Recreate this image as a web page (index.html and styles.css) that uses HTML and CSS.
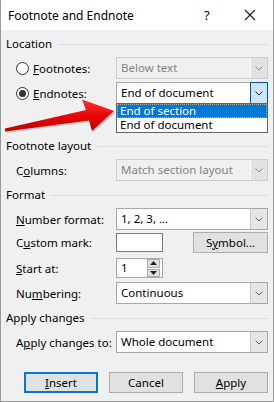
FILE: index.html
```html
<!DOCTYPE html>
<html lang="en">
<head>
    <meta charset="UTF-8">
    <meta name="viewport" content="width=device-width, initial-scale=1.0">
    <title>Footnote and Endnote</title>
    <link rel="stylesheet" href="styles.css">
</head>
<body>

    <div class="dialog">
        <div class="titlebar">
            <span class="title">Footnote and Endnote</span>
            <span class="help">?</span>
            <span class="close">
                <svg width="12" height="12" viewBox="0 0 12 12"><path d="M1 1L11 11M11 1L1 11" stroke="#1a1a1a" stroke-width="1.1" fill="none"/></svg>
            </span>
        </div>

        <div class="body">
            <div class="group-title">Location</div>
            <div class="row first">
                <span class="label radio-label"><span class="radio"></span><u>F</u>ootnotes:</span>
                <div class="combo disabled">
                    <span class="combo-text">Below text</span>
                    <span class="combo-btn"><svg width="8" height="5" viewBox="0 0 8 5"><path d="M0.5 0.5L4 4L7.5 0.5" stroke="#8a8a8a" fill="none"/></svg></span>
                </div>
            </div>
            <div class="row endnotes">
                <span class="label radio-label"><span class="radio checked"></span><u>E</u>ndnotes:</span>
                <div class="combo open">
                    <span class="combo-text">End of document</span>
                    <span class="combo-btn"><svg width="8" height="5" viewBox="0 0 8 5"><path d="M0.5 0.5L4 4L7.5 0.5" stroke="#333" fill="none"/></svg></span>
                    <ul class="combo-list">
                        <li class="selected">End of section</li>
                        <li>End of document</li>
                    </ul>
                </div>
            </div>

            <div class="group-title layout-title">Footnote layout</div>
            <div class="row first">
                <span class="label">C<u>o</u>lumns:</span>
                <div class="combo disabled">
                    <span class="combo-text">Match section layout</span>
                    <span class="combo-btn"><svg width="8" height="5" viewBox="0 0 8 5"><path d="M0.5 0.5L4 4L7.5 0.5" stroke="#8a8a8a" fill="none"/></svg></span>
                </div>
            </div>

            <div class="group-title">Format</div>
            <div class="row first">
                <span class="label"><u>N</u>umber format:</span>
                <div class="combo">
                    <span class="combo-text">1, 2, 3, ...</span>
                    <span class="combo-btn"><svg width="8" height="5" viewBox="0 0 8 5"><path d="M0.5 0.5L4 4L7.5 0.5" stroke="#606060" fill="none"/></svg></span>
                </div>
            </div>
            <div class="row mark-row">
                <span class="label">C<u>u</u>stom mark:</span>
                <div class="textbox mark-box"></div>
                <button class="btn symbol-btn">S<u>y</u>mbol...</button>
            </div>
            <div class="row start-row">
                <span class="label"><u>S</u>tart at:</span>
                <div class="textbox spin-box">
                    <span class="spin-text">1</span>
                    <span class="spin">
                        <span class="spin-up"><svg width="7" height="4" viewBox="0 0 7 4"><path d="M0 4L3.5 0L7 4Z" fill="#222"/></svg></span>
                        <span class="spin-down"><svg width="7" height="4" viewBox="0 0 7 4"><path d="M0 0L3.5 4L7 0Z" fill="#222"/></svg></span>
                    </span>
                </div>
            </div>
            <div class="row numbering-row">
                <span class="label">Nu<u>m</u>bering:</span>
                <div class="combo">
                    <span class="combo-text">Continuous</span>
                    <span class="combo-btn"><svg width="8" height="5" viewBox="0 0 8 5"><path d="M0.5 0.5L4 4L7.5 0.5" stroke="#606060" fill="none"/></svg></span>
                </div>
            </div>

            <div class="group-title apply-title">Apply changes</div>
            <div class="row first">
                <span class="label">A<u>p</u>ply changes to:</span>
                <div class="combo">
                    <span class="combo-text">Whole document</span>
                    <span class="combo-btn"><svg width="8" height="5" viewBox="0 0 8 5"><path d="M0.5 0.5L4 4L7.5 0.5" stroke="#606060" fill="none"/></svg></span>
                </div>
            </div>

            <div class="button-row">
                <button class="btn default-btn"><u>I</u>nsert</button>
                <button class="btn">Cancel</button>
                <button class="btn"><u>A</u>pply</button>
            </div>
        </div>

        <svg class="red-arrow" width="120" height="42" viewBox="0 94 120 42">
            <defs>
                <linearGradient id="arrowFill" x1="0" y1="0" x2="0" y2="1">
                    <stop offset="0" stop-color="#ff3030"/>
                    <stop offset="0.5" stop-color="#e80808"/>
                    <stop offset="1" stop-color="#b80000"/>
                </linearGradient>
            </defs>
            <path d="M4 128.5L85 110L81 99.5L113 111L91 131L88 120.5L4 131.5Z" fill="#000" opacity="0.18" transform="translate(1.2,1.6)"/>
            <path d="M4 128.5L85 110L81 99.5L113 111L91 131L88 120.5L4 131.5Z" fill="url(#arrowFill)"/>
        </svg>
    </div>

</body>
</html>
```

FILE: styles.css
```css
body {
    margin: 0;
    font-family: "Noto Sans", "Open Sans", sans-serif;
    font-size: 11.5px;
    color: #000;
}
.dialog {
    position: relative;
    width: 274px;
    height: 402px;
    box-sizing: border-box;
    background-color: #f0f0f0;
    border: 1px solid #9a9a9a;
    border-top: none;
    overflow: hidden;
}
.titlebar {
    display: flex;
    align-items: center;
    height: 30px;
    background-color: #fff;
    padding-left: 7px;
}
.title {
    font-size: 12px;
    flex: 1;
}
.help {
    font-size: 13px;
    width: 40px;
}
.close {
    display: flex;
    width: 29px;
}
.body {
    padding: 6px 5px 0 5px;
}
.group-title {
    display: flex;
    align-items: center;
    height: 16px;
    line-height: 16px;
}
.group-title::after {
    content: "";
    flex: 1;
    height: 1px;
    margin-left: 6px;
    background-color: #dcdcdc;
}
.layout-title {
    margin-top: 34px;
}
.apply-title {
    margin-top: 6px;
}
.row {
    display: flex;
    align-items: center;
    height: 22px;
    margin-top: 3px;
}
.row.first {
    margin-top: 5px;
}
.row + .group-title {
    margin-top: 6px;
}
.row.endnotes + .group-title {
    margin-top: 34px;
}
.mark-row {
    height: 21px;
    margin-top: 2px;
}
.start-row {
    height: 20px;
    margin-top: 5px;
}
.numbering-row {
    margin-top: 4px;
}
.label {
    width: 100px;
    padding-left: 10px;
    white-space: nowrap;
}
.radio-label {
    display: flex;
    align-items: center;
}
.radio {
    position: relative;
    width: 11px;
    height: 11px;
    margin-right: 4px;
    border: 1px solid #333;
    border-radius: 50%;
    background-color: #fff;
}
.radio.checked::after {
    content: "";
    position: absolute;
    left: 2px;
    top: 2px;
    width: 7px;
    height: 7px;
    border-radius: 50%;
    background-color: #333;
}
.combo {
    position: relative;
    flex: 1;
    display: flex;
    height: 22px;
    box-sizing: border-box;
    border: 1px solid #a8a8a8;
    background-color: #fff;
}
.combo-text {
    flex: 1;
    padding-left: 4px;
    line-height: 20px;
}
.combo-btn {
    display: flex;
    align-items: center;
    justify-content: center;
    width: 16px;
    border-left: 1px solid #c8c8c8;
    background-color: #e6e6e6;
}
.combo.disabled {
    border-color: #cccccc;
    background-color: #f0f0f0;
    color: #838383;
}
.combo.disabled .combo-btn {
    border-left-color: #fff;
    background-color: #e2e2e2;
}
.combo.open .combo-btn {
    margin: -1px -1px -1px 0;
    border: 1px solid #005499;
    background-color: #cce4f7;
}
.combo-list {
    position: absolute;
    left: -1px;
    right: -1px;
    top: 20px;
    margin: 0;
    padding: 0;
    list-style-type: none;
    border: 1px solid #646464;
    background-color: #fff;
    z-index: 1;
}
.combo-list li {
    height: 14px;
    line-height: 14px;
    padding-left: 3px;
}
.combo-list li.selected {
    background-color: #0078d7;
    color: #fff;
    outline: 1px dotted #ff9a2e;
    outline-offset: -1px;
}
.textbox {
    height: 19px;
    box-sizing: border-box;
    border: 1px solid #7a7a7a;
    background-color: #fff;
}
.mark-box {
    width: 47px;
}
.spin-box {
    display: flex;
    width: 47px;
    height: 20px;
    border-color: #a8a8a8;
}
.spin-text {
    flex: 1;
    padding-left: 4px;
    line-height: 18px;
}
.spin {
    display: flex;
    flex-direction: column;
    justify-content: center;
    gap: 1px;
    width: 17px;
}
.spin-up, .spin-down {
    display: flex;
    align-items: center;
    justify-content: center;
    height: 8px;
    margin: 0 2px;
    border: 1px solid #adadad;
    background-color: #e1e1e1;
}
.btn {
    height: 21px;
    padding: 0;
    box-sizing: border-box;
    border: 1px solid #adadad;
    background-color: #e1e1e1;
    font-family: inherit;
    font-size: inherit;
    color: #000;
}
.symbol-btn {
    width: 75px;
    margin-left: auto;
}
.button-row {
    display: flex;
    justify-content: flex-end;
    gap: 11px;
    margin-top: 19px;
}
.button-row .btn {
    width: 74px;
}
.default-btn {
    border: 2px solid #0078d7;
}
.red-arrow {
    position: absolute;
    left: 0;
    top: 94px;
    z-index: 2;
}
```
